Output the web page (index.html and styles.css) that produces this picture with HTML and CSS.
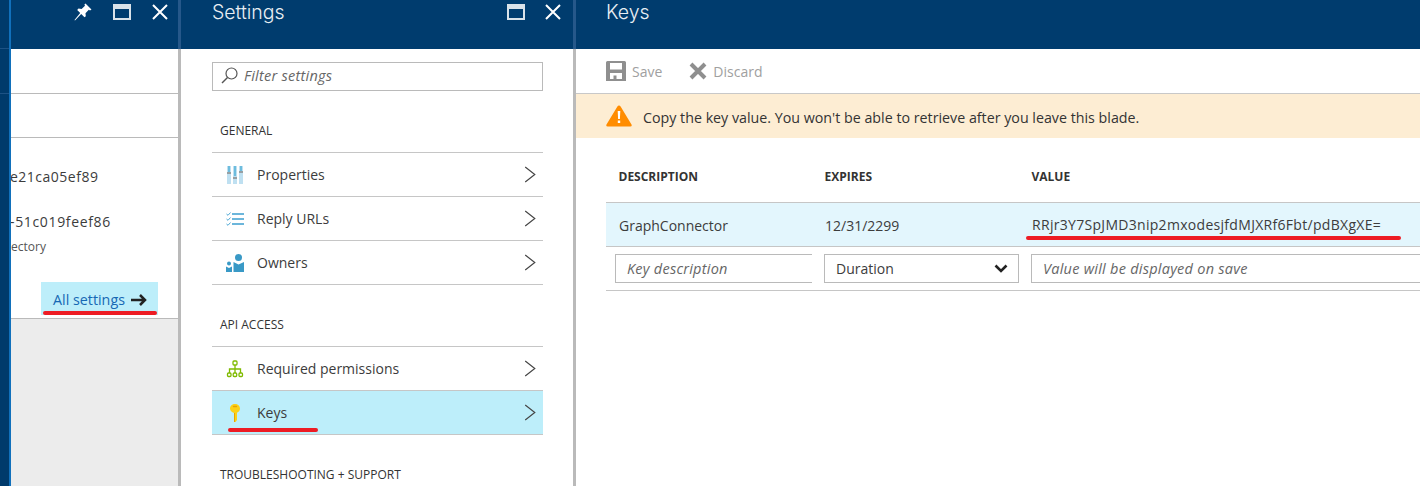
FILE: index.html
```html
<!DOCTYPE html>
<html lang="en">
<head>
  <meta charset="UTF-8">
  <title>Keys</title>
  <link rel="stylesheet" href="styles.css">
</head>
<body>
  <div class="strip"></div>

  <!-- app blade, mostly scrolled off to the left -->
  <section class="blade blade-app">
    <header class="blade-head">
      <div class="head-btns">
        <svg class="ic-pin" viewBox="0 0 18 18"><path d="M11.5 0.5 L17.5 6.5 L16 7.5 L14.8 6.8 L11.5 10.2 L11.8 13.2 L10.5 14.3 L7.2 11 L1 17.5 L0.5 17 L6.2 10 L3.2 7 L4.5 5.6 L7.6 6 L11 2.8 L10.4 1.6 Z" fill="#fff"/></svg>
        <svg class="ic-max" viewBox="0 0 18 16"><path d="M0 0H18V16H0ZM2 5V14H16V5Z" fill="#fff" opacity=".85"/></svg>
        <svg class="ic-close" viewBox="0 0 16 16"><path d="M1 1L15 15M15 1L1 15" stroke="#fff" stroke-width="2"/></svg>
      </div>
    </header>
    <div class="app-tab app-tab-first"></div>
    <div class="app-tab"></div>
    <div class="app-info">
      <p class="app-id app-id-first">e21ca05ef89</p>
      <p class="app-id app-id-second">-51c019feef86</p>
      <p class="app-note">ectory</p>
      <div class="app-link-row">
        <a class="all-settings">All settings
          <svg class="ic-arrow" viewBox="0 0 16 12"><path d="M0 6H13.5M9 1L14 6L9 11" fill="none" stroke="#222" stroke-width="2.5"/></svg>
          <span class="mark mark-all"></span>
        </a>
      </div>
    </div>
    <div class="app-rest"></div>
  </section>

  <!-- settings blade -->
  <section class="blade blade-settings">
    <header class="blade-head">
      <h2 class="blade-title">Settings</h2>
      <div class="head-btns">
        <svg class="ic-max" viewBox="0 0 18 16"><path d="M0 0H18V16H0ZM2 5V14H16V5Z" fill="#fff" opacity=".85"/></svg>
        <svg class="ic-close" viewBox="0 0 16 16"><path d="M1 1L15 15M15 1L1 15" stroke="#fff" stroke-width="2"/></svg>
      </div>
    </header>
    <div class="settings-body">
      <div class="filter">
        <svg class="ic-search" viewBox="0 0 17 17"><circle cx="10.5" cy="6.5" r="5.5" fill="none" stroke="#555" stroke-width="1.2"/><path d="M6.5 10.5L1 16" stroke="#555" stroke-width="1.4"/></svg>
        <span>Filter settings</span>
      </div>

      <h3 class="group-title">GENERAL</h3>
      <ul class="menu">
        <li class="menu-row">
          <svg class="ic-menu" viewBox="0 0 18 18"><rect x="1" y="0" width="4" height="18" fill="#bfe0f1"/><rect x="7" y="0" width="4" height="18" fill="#bfe0f1"/><rect x="13" y="0" width="4" height="18" fill="#bfe0f1"/><path d="M3 0V6M9 0V10M15 0V5" stroke="#59b4d9" stroke-width="1.6"/><path d="M1 7H5M7 12H11M13 6H17" stroke="#8a8a8a" stroke-width="1.6"/></svg>
          <span>Properties</span>
          <svg class="ic-chev" viewBox="0 0 11 16"><path d="M1 1L10 8L1 15" fill="none" stroke="#444" stroke-width="1.1"/></svg>
        </li>
        <li class="menu-row">
          <svg class="ic-menu" viewBox="0 0 18 14"><path d="M6 2H18M6 7H18M6 12H18" stroke="#3c9fd0" stroke-width="1.6"/><path d="M0.5 2L2 3.3L4.5 0.5M0.5 7L2 8.3L4.5 5.5M0.5 12L2 13.3L4.5 10.5" fill="none" stroke="#3c9fd0" stroke-width="0.9"/></svg>
          <span>Reply URLs</span>
          <svg class="ic-chev" viewBox="0 0 11 16"><path d="M1 1L10 8L1 15" fill="none" stroke="#444" stroke-width="1.1"/></svg>
        </li>
        <li class="menu-row">
          <svg class="ic-menu" viewBox="0 0 18 18"><circle cx="12.5" cy="3.5" r="3.5" fill="#3999c6"/><path d="M7.5 8L12.5 10.5L18 8V18H7.5Z" fill="#3999c6"/><circle cx="3" cy="9.5" r="2" fill="#3999c6"/><path d="M0 12.5L3 14L6 12.5V18H0Z" fill="#3999c6"/></svg>
          <span>Owners</span>
          <svg class="ic-chev" viewBox="0 0 11 16"><path d="M1 1L10 8L1 15" fill="none" stroke="#444" stroke-width="1.1"/></svg>
        </li>
      </ul>

      <h3 class="group-title">API ACCESS</h3>
      <ul class="menu">
        <li class="menu-row">
          <svg class="ic-menu" viewBox="0 0 18 18"><path d="M9 5V11M9 9H3.5V13M9 9H14.5V13M9 11V13" fill="none" stroke="#7fba00" stroke-width="1.3"/><rect x="7" y="1" width="4" height="4" rx="1" fill="#fff" stroke="#7fba00" stroke-width="1.3"/><rect x="1.5" y="13" width="3.5" height="3.5" rx="1" fill="#fff" stroke="#7fba00" stroke-width="1.3"/><rect x="7.2" y="13" width="3.5" height="3.5" rx="1" fill="#fff" stroke="#7fba00" stroke-width="1.3"/><rect x="13" y="13" width="3.5" height="3.5" rx="1" fill="#fff" stroke="#7fba00" stroke-width="1.3"/></svg>
          <span>Required permissions</span>
          <svg class="ic-chev" viewBox="0 0 11 16"><path d="M1 1L10 8L1 15" fill="none" stroke="#444" stroke-width="1.1"/></svg>
        </li>
        <li class="menu-row menu-row-on">
          <svg class="ic-menu" viewBox="0 0 18 18"><path d="M9 0C11.8 0 14 2 14 4.6C14 6.6 12.6 8.2 11 8.8V16L9.5 18H8V9C5.8 8.4 4 6.8 4 4.6C4 2 6.2 0 9 0Z" fill="#fcd116"/><rect x="6.8" y="1.8" width="4.4" height="1.5" rx=".7" fill="#e8a200"/><path d="M8 9H9V18H8Z" fill="#e8a200"/></svg>
          <span>Keys</span>
          <svg class="ic-chev" viewBox="0 0 11 16"><path d="M1 1L10 8L1 15" fill="none" stroke="#444" stroke-width="1.1"/></svg>
          <span class="mark mark-keys"></span>
        </li>
      </ul>

      <h3 class="group-title">TROUBLESHOOTING + SUPPORT</h3>
    </div>
  </section>

  <!-- keys blade -->
  <section class="blade blade-keys">
    <header class="blade-head">
      <h2 class="blade-title">Keys</h2>
    </header>
    <div class="toolbar">
      <span class="tool">
        <svg class="ic-save" viewBox="0 0 20 20"><path d="M0 1.5Q0 0 1.5 0H18.5Q20 0 20 1.5V20H0ZM4 2V8.5H16V2ZM4 12V18H16V12ZM7.5 14.5H10.5V18H7.5Z" fill="#8f8f8f" fill-rule="evenodd"/></svg>
        Save
      </span>
      <span class="tool">
        <svg class="ic-discard" viewBox="0 0 18 18"><path d="M2 2L16 16M16 2L2 16" stroke="#8f8f8f" stroke-width="4"/></svg>
        Discard
      </span>
    </div>
    <div class="notice">
      <svg class="ic-warn" viewBox="0 0 26 22"><path d="M13 0.5Q14 0.5 14.6 1.6L25.5 19.5Q26.3 21.5 24.3 21.5H1.7Q-0.3 21.5 0.5 19.5L11.4 1.6Q12 0.5 13 0.5Z" fill="#ff8c00"/><path d="M11.7 6H14.3L13.9 14H12.1ZM11.8 15.5H14.2V18H11.8Z" fill="#fff"/></svg>
      <span class="notice-text">Copy the key value. You won't be able to retrieve after you leave this blade.</span>
    </div>
    <div class="keys-area">
      <div class="keys-grid keys-head">
        <span>DESCRIPTION</span>
        <span>EXPIRES</span>
        <span>VALUE</span>
      </div>
      <div class="keys-grid keys-row">
        <span>GraphConnector</span>
        <span>12/31/2299</span>
        <span class="key-value">RRjr3Y7SpJMD3nip2mxodesjfdMJXRf6Fbt/pdBXgXE=</span>
        <span class="mark mark-value"></span>
      </div>
      <div class="keys-grid keys-new">
        <div class="field field-desc">Key description</div>
        <div class="field field-select">Duration
          <svg class="ic-drop" viewBox="0 0 14 9"><path d="M1.5 1.5L7 7L12.5 1.5" fill="none" stroke="#222" stroke-width="2.6"/></svg>
        </div>
        <div class="field field-value">Value will be displayed on save</div>
      </div>
    </div>
  </section>
</body>
</html>
```

FILE: styles.css
```css
* { box-sizing: border-box; }
html, body { height: 100%; }
body {
  margin: 0;
  display: flex;
  height: 486px;
  overflow: hidden;
  background: #fff;
  font-family: "Open Sans", "Noto Sans", sans-serif;
  font-size: 13.5px;
  color: #3c3c3c;
}
h2, h3, p, ul { margin: 0; padding: 0; list-style: none; font-weight: normal; }

.strip {
  width: 11px;
  flex: none;
  background: linear-gradient(#1d5285, #1d5285) 0 48px / 100% 1px no-repeat,
    linear-gradient(#1d5285, #1d5285) 0 93px / 100% 1px no-repeat,
    #003a6b;
  border-right: 2px solid #1170bb;
}
.blade {
  flex: none;
  height: 486px;
  overflow: hidden;
  background: linear-gradient(#bababa, #bababa) right / 3px 100% no-repeat;
  display: flex;
  flex-direction: column;
}
.blade > * { margin-right: 3px; }
.blade-app { width: 170px; }
.blade-settings { width: 395px; }
.blade-keys { flex: 1; background: none; }
.blade-keys > * { margin-right: 0; }

.blade > .blade-head {
  height: 49px;
  flex: none;
  margin-right: 0;
  background: #003c6e;
  border-right: 3px solid #26588a;
  display: flex;
  justify-content: space-between;
  align-items: flex-start;
}
.blade-keys > .blade-head { border-right: none; }
.blade-title {
  font-family: Inter, "Open Sans", sans-serif;
  font-size: 19.5px;
  font-weight: 300;
  color: #e8eef3;
  line-height: 24px;
}
.head-btns {
  display: flex;
  align-items: center;
  margin-left: auto;
  gap: 21px;
  height: 24px;
  padding-right: 10px;
}
.ic-pin { width: 18px; height: 18px; display: block; }
.ic-max { width: 18px; height: 16px; display: block; }
.ic-close { width: 16px; height: 16px; display: block; }

/* app blade */
.app-tab { height: 44px; flex: none; border-bottom: 1px solid #bababa; }
.app-tab-first { height: 45px; }
.app-info { flex: none; height: 181px; border-bottom: 1px solid #bababa; padding-top: 29px; }
.app-id { font-size: 14px; line-height: 20px; white-space: nowrap; }
.app-id-first { margin-left: -1px; letter-spacing: 0.5px; }
.app-id-second { margin-left: -1px; margin-top: 25px; letter-spacing: 0.65px; }
.app-note { font-size: 12px; line-height: 18px; margin-top: 6px; color: #555; }
.app-link-row { display: flex; justify-content: flex-end; padding-right: 20px; margin-top: 26px; }
.all-settings {
  position: relative;
  display: flex;
  align-items: center;
  gap: 6px;
  width: 117px;
  height: 33px;
  padding-left: 12px;
  padding-top: 2px;
  background: #bdeefa;
  color: #1668b4;
  font-size: 14.3px;
}
.ic-arrow { width: 16px; height: 12px; }
.app-rest { flex: 1; background: #ececec; }

.mark {
  position: absolute;
  height: 4px;
  border-radius: 2px;
  background: #ed1c24;
}
.mark-all { left: 2px; right: 1px; bottom: 0; }

/* settings blade */
.blade-settings .blade-title { padding-left: 31px; }
.blade-settings .head-btns { gap: 20px; padding-right: 12px; }
.settings-body { padding: 13px 30px 0 31px; }
.filter {
  height: 29px;
  border: 1px solid #bababa;
  display: flex;
  align-items: center;
  gap: 6px;
  padding-left: 8px;
  padding-bottom: 2px;
  font-style: italic;
  color: #666;
  font-size: 14.5px;
  letter-spacing: 0.25px;
}
.ic-search { width: 17px; height: 17px; flex: none; }
.group-title {
  font-size: 12px;
  line-height: 16px;
  color: #333;
  padding-left: 8px;
  margin-top: 32px;
  margin-bottom: 13px;
}
.menu { border-top: 1px solid #c6c6c6; margin-top: 0; }
.menu-row {
  position: relative;
  height: 44px;
  display: flex;
  align-items: center;
  border-bottom: 1px solid #c6c6c6;
  font-size: 14px;
  padding-left: 14px;
  padding-right: 7px;
}
.menu-row-on { background: #bdeefa; }
.ic-menu { width: 18px; height: 18px; flex: none; margin-right: 13px; }
.ic-chev { width: 12px; height: 17px; flex: none; margin-left: auto; }
.mark-keys { left: 16px; width: 90px; bottom: 2px; }

/* keys blade */
.blade-keys .blade-title { padding-left: 30px; }
.toolbar {
  height: 44px;
  flex: none;
  display: flex;
  align-items: center;
  gap: 27px;
  padding-left: 30px;
  color: #a0a0a0;
  font-size: 14px;
}
.tool { display: flex; align-items: center; gap: 6px; }
.ic-save { width: 20px; height: 20px; }
.ic-discard { width: 18px; height: 18px; }
.notice {
  height: 45px;
  flex: none;
  background: #fdedd3;
  border-top: 1px solid #c8c8c8;
  display: flex;
  align-items: center;
  gap: 11px;
  padding-left: 30px;
  font-size: 14.25px;
  color: #333;
}
.notice-text { padding-top: 2px; }
.ic-warn { width: 26px; height: 22px; }
.keys-area { padding: 0 0 0 30px; }
.keys-grid {
  display: grid;
  grid-template-columns: 206px 207px 1fr;
  align-items: center;
  position: relative;
}
.keys-head {
  height: 64px;
  padding-left: 12.5px;
  padding-top: 12px;
  font-size: 12px;
  font-weight: 700;
  color: #333;
}
.keys-row {
  height: 45px;
  padding-left: 13px;
  padding-top: 1px;
  background: #e3f6fd;
  border-top: 1px solid #c6c6c6;
  border-bottom: 1px solid #c6c6c6;
  font-size: 14px;
}
.key-value { letter-spacing: 0.3px; padding-bottom: 2px; }
.mark-value { left: 420px; width: 375px; bottom: 6px; }
.keys-new {
  height: 44px;
  grid-template-columns: 218px 207px 1fr;
  border-bottom: 1px solid #c6c6c6;
}
.field {
  height: 29px;
  border: 1px solid #bababa;
  display: flex;
  align-items: center;
  padding-left: 11px;
  font-size: 14px;
}
.field-desc { width: 197px; margin-left: 9px; border-right: none; font-style: italic; color: #666; font-size: 14.5px; letter-spacing: 0.25px; padding-bottom: 1px; }
.field-select { width: 195px; justify-content: space-between; padding-right: 10px; }
.field-value { border-right: none; font-style: italic; color: #666; font-size: 14.5px; letter-spacing: 0.25px; }
.ic-drop { width: 14px; height: 9px; }
```
